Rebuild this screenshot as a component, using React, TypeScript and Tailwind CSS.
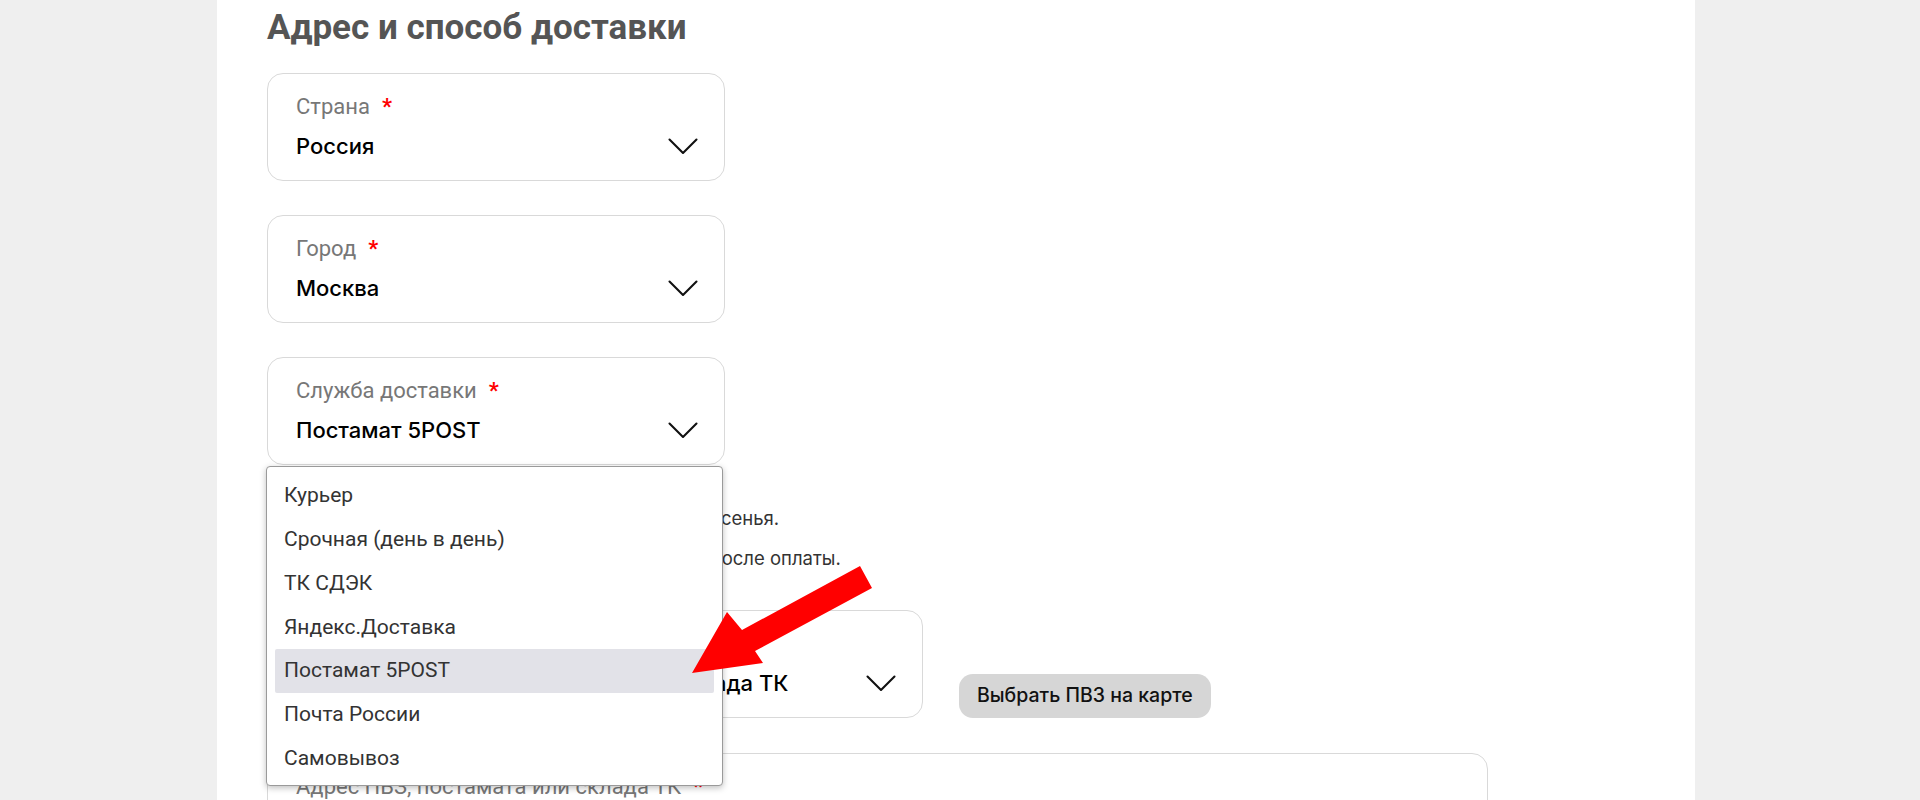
import React from "react";

const Chevron = () => (
  <svg width="30" height="17" viewBox="0 0 30 17" fill="none" className="shrink-0">
    <path d="M1.5 1.5 L15 15 L28.5 1.5" stroke="#111" strokeWidth="2.1" strokeLinecap="round" strokeLinejoin="round" />
  </svg>
);

function Field({ label, value, className = "" }: { label?: string; value: string; className?: string }) {
  return (
    <div className={`h-[108px] rounded-[16px] border border-[#d9d9d9] bg-white pl-[28px] pr-[26px] pt-[19px] ${className}`}>
      <div className="flex h-[26px] items-center gap-[12px] font-['Roboto',sans-serif] text-[22px] text-[#777]">
        <span>{label}</span>
        <span className="text-[22px] font-bold text-[#ff0000]">*</span>
      </div>
      <div className="mt-[13px] flex h-[28px] items-center justify-between">
        <span className="whitespace-nowrap font-['Inter',sans-serif] text-[22px] font-medium text-black">{value}</span>
        <Chevron />
      </div>
    </div>
  );
}

const options = [
  "Курьер",
  "Срочная (день в день)",
  "ТК СДЭК",
  "Яндекс.Доставка",
  "Постамат 5POST",
  "Почта России",
  "Самовывоз",
];

export default function App() {
  return (
    <div className="relative h-[800px] w-full overflow-hidden bg-[#efefef]">
      <div className="ml-[217px] h-full w-[1478px] bg-white pl-[50px] pt-[8px]">
        <h1 className="font-['Roboto',sans-serif] text-[35px] font-bold leading-[40px] text-[#555]">
          Адрес и способ доставки
        </h1>
        <div className="mt-[25px] flex w-[458px] flex-col gap-[34px]">
          <Field label="Страна" value="Россия" />
          <Field label="Город" value="Москва" />
          <div className="relative">
            <Field label="Служба доставки" value="Постамат 5POST" />
            <div className="absolute left-[-1px] top-[109px] z-10 h-[320px] w-[457px] rounded-[4px] border border-[#9a9a9a] bg-white px-[8px] pt-[7px] shadow-[0_2px_6px_rgba(0,0,0,0.25)]">
              {options.map((o) => (
                <div
                  key={o}
                  className={`flex h-[43.8px] items-center rounded-[2px] px-[9px] font-['Roboto',sans-serif] text-[21px] text-[#333] ${
                    o === "Постамат 5POST" ? "bg-[#e2e2e8]" : ""
                  }`}
                >
                  {o}
                </div>
              ))}
            </div>
          </div>
        </div>
        <div className="mt-[33px] whitespace-nowrap font-['Inter',sans-serif] text-[18.5px] leading-[40px] text-[#333]">
          <p>Доставка выполняется ежедневно, кроме воскресенья.</p>
          <p>Отправка заказа происходит в течение 1-2 дней после оплаты.</p>
        </div>
        <div className="mt-[32px] flex items-end gap-[36px]">
          <Field label="Пункт выдачи" value="Укажите ПВЗ, постамат или адрес склада ТК" className="w-[656px]" />
          <button className="h-[44px] whitespace-nowrap rounded-[14px] bg-[#d6d6d6] px-[18px] font-['Inter',sans-serif] text-[19.5px] font-medium text-[#111]">
            Выбрать ПВЗ на карте
          </button>
        </div>
        <div className="mt-[35px] h-[108px] w-[1221px] rounded-[16px] border border-[#d9d9d9] bg-white pl-[28px] pt-[19px]">
          <div className="flex h-[26px] items-center gap-[12px] font-['Roboto',sans-serif] text-[22px] text-[#777]">
            <span>Адрес ПВЗ, постамата или склада ТК</span>
            <span className="text-[22px] font-bold text-[#ff0000]">*</span>
          </div>
        </div>
      </div>
      <svg className="absolute left-0 top-0 z-20" width="1920" height="800" viewBox="0 0 1920 800" pointerEvents="none">
        <polygon
          points="692,673 763,663 755,651 872,588 860,566 742,630 727,612"
          fill="#ff0000"
        />
      </svg>
    </div>
  );
}
